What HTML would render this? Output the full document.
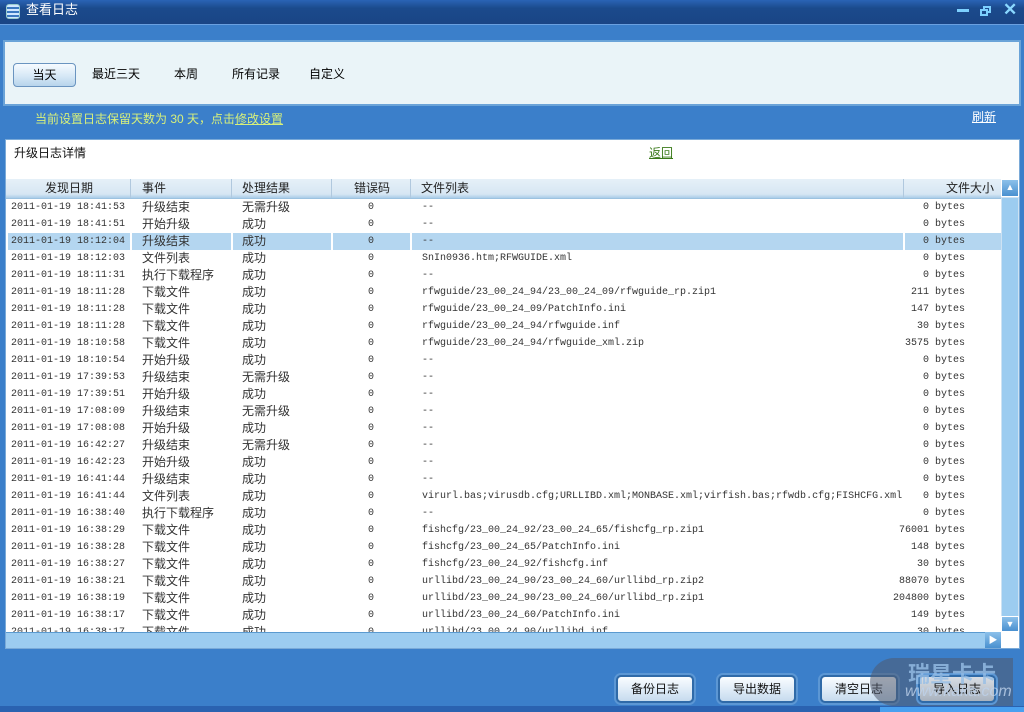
<!DOCTYPE html><html><head><meta charset="utf-8"><style>
*{margin:0;padding:0;box-sizing:border-box}
body{width:1024px;height:712px;overflow:hidden;background:#3b7fca;font-family:"Liberation Sans","WenQuanYi Zen Hei","Noto Sans CJK SC",sans-serif;font-size:12px;line-height:13px;position:relative}
.a{position:absolute;white-space:nowrap}
.title{left:0;top:0;width:1024px;height:25px;background:linear-gradient(#2a63b6,#1b4a8c 35%,#1a4585);border-bottom:1px solid #6aa0e0}
.mono{font-family:"Liberation Mono","WenQuanYi Zen Hei",monospace;font-size:10px;line-height:11px}
.btn{position:absolute;top:675px;height:28px;border:2px solid #2f6aa8;border-radius:5px;background:linear-gradient(#fafdff,#dbe9f6 60%,#c6dbee);box-shadow:0 0 0 2px #5c97d4;text-align:center;line-height:24px;font-size:12px;color:#111}
.sel{background:#b4d6f0}
</style></head><body>
<div class="a title"></div>
<div class="a" style="left:6px;top:4px;width:14px;height:15px;border-radius:3px;background:repeating-linear-gradient(#cfe6ff 0 2px,#3a78c0 2px 4px);border:1px solid #9cc"></div>
<div class="a" style="left:26px;top:3px;color:#fff;font-size:13px;line-height:14px">查看日志</div>
<div class="a" style="left:957px;top:9px;width:12px;height:3px;background:#7cd0ff"></div>
<div class="a" style="left:983px;top:6px;width:8px;height:7px;border:2px solid #7cd0ff"></div>
<div class="a" style="left:980px;top:9px;width:8px;height:7px;border:2px solid #7cd0ff;background:#1b4a8c"></div>
<div class="a" style="left:1003px;top:1px;color:#8ad8ff;font-size:17px;line-height:18px;font-weight:bold">✕</div>

<div class="a" style="left:3px;top:40px;width:1018px;height:66px;background:#eaf4f8;border:2px solid #6aa3d8"></div>
<div class="a" style="left:13px;top:63px;width:63px;height:24px;border:1px solid #6a94c0;border-radius:4px;background:linear-gradient(#f6fbff,#d6e8f6 55%,#b7d4ec);text-align:center;line-height:22px">当天</div>
<div class="a" style="left:92px;top:68px">最近三天</div>
<div class="a" style="left:174px;top:68px">本周</div>
<div class="a" style="left:232px;top:68px">所有记录</div>
<div class="a" style="left:309px;top:68px">自定义</div>

<div class="a" style="left:35px;top:113px;color:#d8f07a">当前设置日志保留天数为 30 天，点击<span style="text-decoration:underline">修改设置</span></div>
<div class="a" style="left:972px;top:111px;color:#fff;text-decoration:underline">刷新</div>

<div class="a" style="left:5px;top:139px;width:1015px;height:510px;background:#fff;border:1px solid #7aaad8"></div>
<div class="a" style="left:14px;top:147px;color:#111">升级日志详情</div>
<div class="a" style="left:649px;top:147px;color:#3a7a1a;text-decoration:underline">返回</div>

<div class="a" style="left:6px;top:179px;width:995px;height:20px;background:linear-gradient(#e6f0f8,#d6e6f3 80%,#a9cce8);border-bottom:1px solid #9cc2e0"></div>
<div class="a" style="left:130px;top:179px;width:1px;height:19px;background:#b0c8de"></div>
<div class="a" style="left:231px;top:179px;width:1px;height:19px;background:#b0c8de"></div>
<div class="a" style="left:331px;top:179px;width:1px;height:19px;background:#b0c8de"></div>
<div class="a" style="left:410px;top:179px;width:1px;height:19px;background:#b0c8de"></div>
<div class="a" style="left:903px;top:179px;width:1px;height:19px;background:#b0c8de"></div>
<div class="a" style="left:45px;top:182px;color:#222">发现日期</div>
<div class="a" style="left:142px;top:182px;color:#222">事件</div>
<div class="a" style="left:242px;top:182px;color:#222">处理结果</div>
<div class="a" style="left:354px;top:182px;color:#222">错误码</div>
<div class="a" style="left:421px;top:182px;color:#222">文件列表</div>
<div class="a" style="left:946px;top:182px;color:#222">文件大小</div>

<div class="a" style="left:6px;top:199px;width:995px;height:433px;overflow:hidden">
<div id="rows" style="position:relative;left:-6px;top:-199px"></div>
</div>

<div class="a" style="left:1001px;top:179px;width:18px;height:453px;background:#cde2f3"></div>
<div class="a" style="left:1001px;top:179px;width:18px;height:18px;background:linear-gradient(#8cc0ea,#4a90d0);border:1px solid #fff;color:#fff;font-size:9px;text-align:center;line-height:15px">▲</div>
<div class="a" style="left:1001px;top:197px;width:18px;height:420px;background:#9cccf0;border:1px solid #cde2f3"></div>
<div class="a" style="left:1001px;top:616px;width:18px;height:16px;background:linear-gradient(#8cc0ea,#4a90d0);border:1px solid #fff;color:#fff;font-size:9px;text-align:center;line-height:14px">▼</div>
<div class="a" style="left:6px;top:632px;width:995px;height:16px;background:#9cccf0;border-top:1px solid #5a9ad0"></div>
<div class="a" style="left:985px;top:632px;width:16px;height:16px;background:linear-gradient(#8cc0ea,#4a90d0);color:#fff;font-size:9px;text-align:center;line-height:16px">▶</div>
<div class="a" style="left:1001px;top:632px;width:18px;height:16px;background:#fff"></div>

<div class="btn" style="left:616px;width:78px">备份日志</div>
<div class="btn" style="left:718px;width:78px">导出数据</div>
<div class="btn" style="left:820px;width:78px">清空日志</div>
<div class="a" style="left:870px;top:658px;width:143px;height:48px;background:rgba(80,90,110,.55);border-radius:24px 0 0 24px"></div>
<div class="btn" style="left:918px;width:78px;background:linear-gradient(#d8dde4,#a8b2be);">导入日志</div>
<div class="a" style="left:908px;top:663px;color:rgba(150,190,230,.8);font-size:22px;line-height:24px;font-weight:bold">瑞星卡卡</div>
<div class="a" style="left:905px;top:683px;color:rgba(190,210,235,.8);font-size:16px;line-height:18px;font-style:italic">www.kaka.com</div>
<div class="a" style="left:0;top:706px;width:1024px;height:6px;background:#2a62b0"></div>
<div class="a" style="left:880px;top:707px;width:144px;height:5px;background:#48a0f0"></div>

<script>
var d=[["18:41:53","升级结束","无需升级","--","0"],["18:41:51","开始升级","成功","--","0"],["18:12:04","升级结束","成功","--","0"],["18:12:03","文件列表","成功","SnIn0936.htm;RFWGUIDE.xml","0"],["18:11:31","执行下载程序","成功","--","0"],["18:11:28","下载文件","成功","rfwguide/23_00_24_94/23_00_24_09/rfwguide_rp.zip1","211"],["18:11:28","下载文件","成功","rfwguide/23_00_24_09/PatchInfo.ini","147"],["18:11:28","下载文件","成功","rfwguide/23_00_24_94/rfwguide.inf","30"],["18:10:58","下载文件","成功","rfwguide/23_00_24_94/rfwguide_xml.zip","3575"],["18:10:54","开始升级","成功","--","0"],["17:39:53","升级结束","无需升级","--","0"],["17:39:51","开始升级","成功","--","0"],["17:08:09","升级结束","无需升级","--","0"],["17:08:08","开始升级","成功","--","0"],["16:42:27","升级结束","无需升级","--","0"],["16:42:23","开始升级","成功","--","0"],["16:41:44","升级结束","成功","--","0"],["16:41:44","文件列表","成功","virurl.bas;virusdb.cfg;URLLIBD.xml;MONBASE.xml;virfish.bas;rfwdb.cfg;FISHCFG.xml","0"],["16:38:40","执行下载程序","成功","--","0"],["16:38:29","下载文件","成功","fishcfg/23_00_24_92/23_00_24_65/fishcfg_rp.zip1","76001"],["16:38:28","下载文件","成功","fishcfg/23_00_24_65/PatchInfo.ini","148"],["16:38:27","下载文件","成功","fishcfg/23_00_24_92/fishcfg.inf","30"],["16:38:21","下载文件","成功","urllibd/23_00_24_90/23_00_24_60/urllibd_rp.zip2","88070"],["16:38:19","下载文件","成功","urllibd/23_00_24_90/23_00_24_60/urllibd_rp.zip1","204800"],["16:38:17","下载文件","成功","urllibd/23_00_24_60/PatchInfo.ini","149"],["16:38:17","下载文件","成功","urllibd/23_00_24_90/urllibd.inf","30"]];
var h="";d.forEach(function(r,i){var t=199+17*i;
if(i==2)h+='<div class="a sel" style="left:8px;top:'+t+'px;width:122px;height:17px"></div><div class="a sel" style="left:132px;top:'+t+'px;width:99px;height:17px"></div><div class="a sel" style="left:233px;top:'+t+'px;width:98px;height:17px"></div><div class="a sel" style="left:333px;top:'+t+'px;width:77px;height:17px"></div><div class="a sel" style="left:412px;top:'+t+'px;width:491px;height:17px"></div><div class="a sel" style="left:905px;top:'+t+'px;width:96px;height:17px"></div>';
h+='<div class="a mono" style="left:11px;top:'+(t+3)+'px;color:#333">2011-01-19 '+r[0]+'</div>'+
'<div class="a" style="left:142px;top:'+(t+2)+'px;color:#333">'+r[1]+'</div>'+
'<div class="a" style="left:242px;top:'+(t+2)+'px;color:#333">'+r[2]+'</div>'+
'<div class="a mono" style="left:368px;top:'+(t+3)+'px;color:#333">0</div>'+
'<div class="a mono" style="left:422px;top:'+(t+3)+'px;color:#333">'+r[3]+'</div>'+
'<div class="a mono" style="right:'+(1024-994)+'px;top:'+(t+3)+'px;color:#333">'+r[4]+' bytes</div>';});
document.getElementById("rows").innerHTML=h;
</script>
</body></html>
